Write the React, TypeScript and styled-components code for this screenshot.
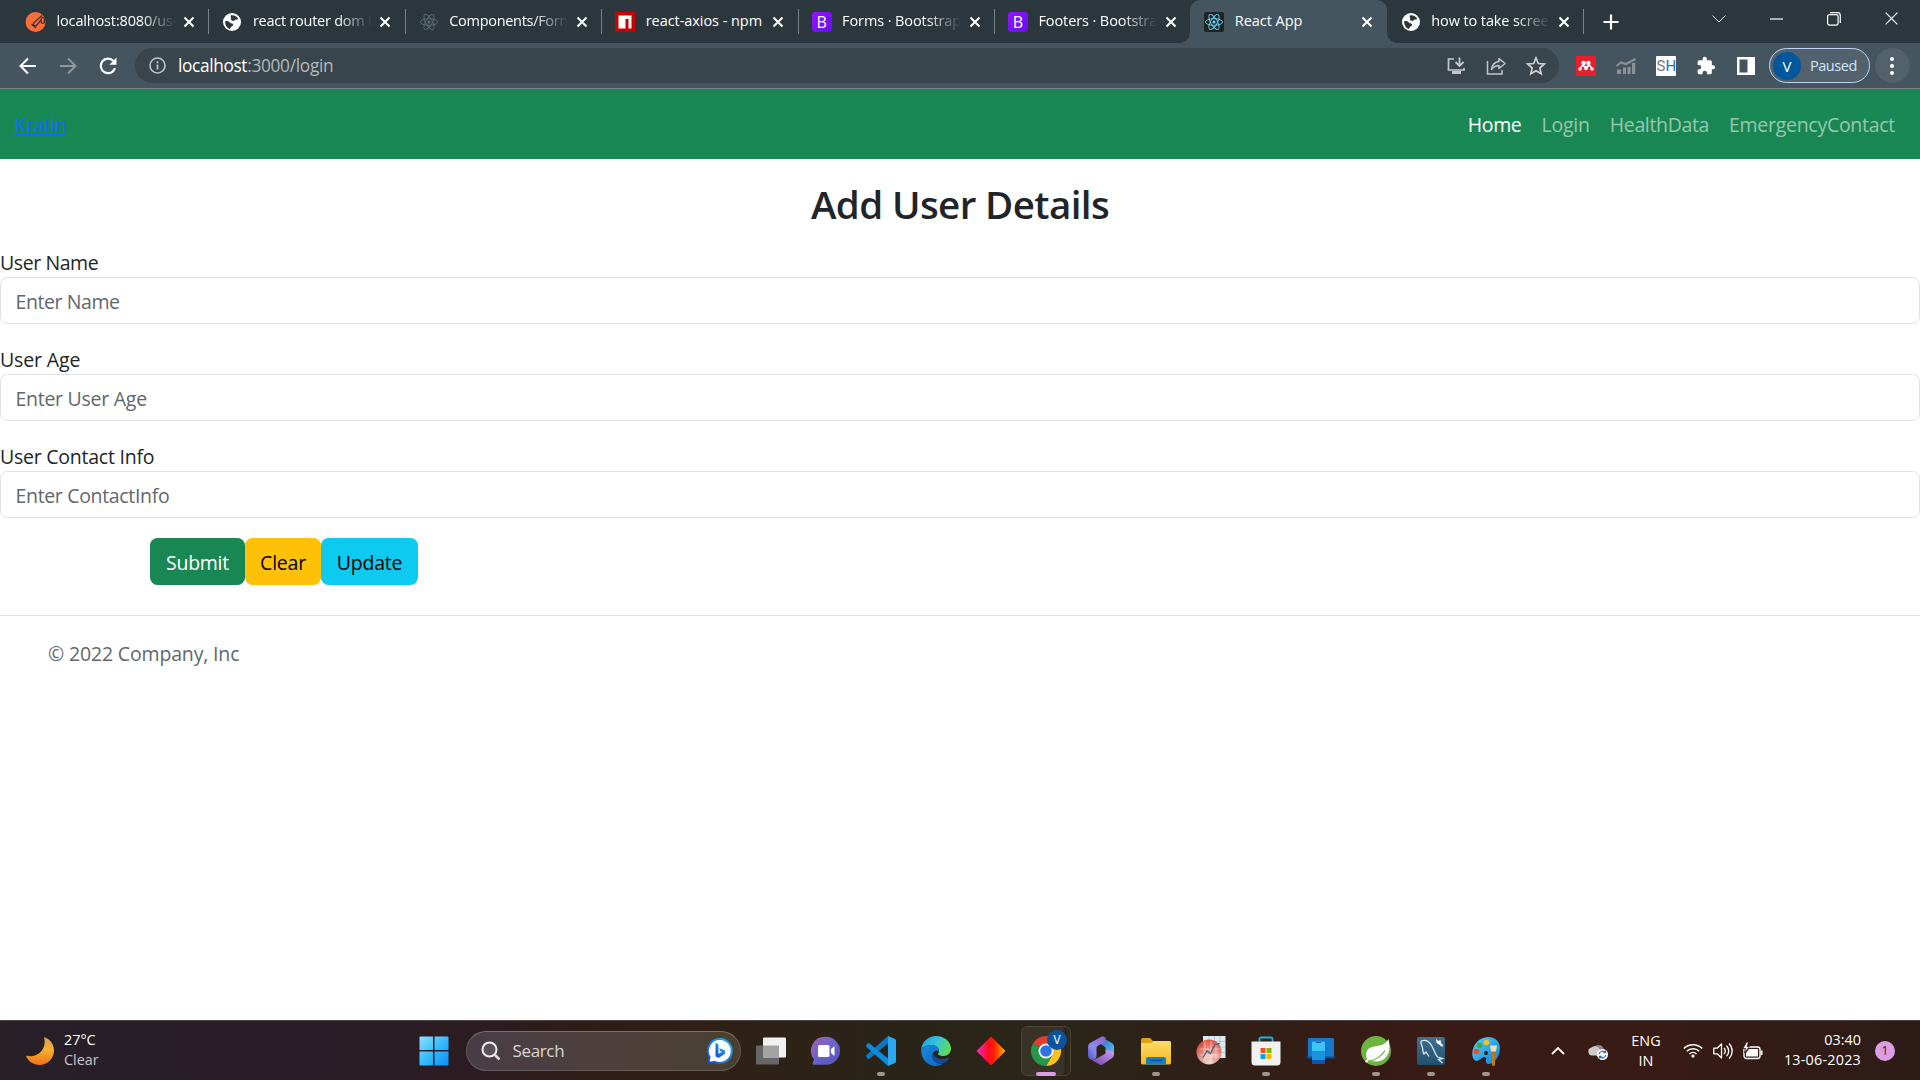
import React from 'react';
import styled, { createGlobalStyle, css } from 'styled-components';

const GlobalStyle = createGlobalStyle`
  *, *::before, *::after { box-sizing: border-box; }
  body { margin: 0; background: #fff; font-family: "Open Sans", "Noto Sans", sans-serif; overflow: hidden; }
  svg { display: block; flex: none; overflow: visible; }
`;

const T = styled.span<{ $track?: number }>`
  letter-spacing: ${p => p.$track ?? 0}px;
  white-space: nowrap;
`;

const Screen = styled.div`
  width: 1920px;
  height: 1080px;
  display: flex;
  flex-direction: column;
  overflow: hidden;
`;

const TabStrip = styled.div`
  height: 43px;
  background: #2c373d;
  display: flex;
  padding-left: 12px;
`;

const Tab = styled.div<{ $active?: boolean; $line?: boolean }>`
  position: relative;
  width: 196.4px;
  height: 43px;
  display: flex;
  align-items: center;
  padding: 0 8.500px 0 14px;
  ${p => p.$active && css`
    background: #44555f;
    border-radius: 10px 10px 0 0;
    &::before, &::after {
      content: '';
      position: absolute;
      bottom: 0;
      width: 10px;
      height: 10px;
    }
    &::before { left: -10px; background: radial-gradient(circle at 0 0, transparent 9.5px, #44555f 10px); }
    &::after { right: -10px; background: radial-gradient(circle at 100% 0, transparent 9.5px, #44555f 10px); }
  `}
  ${p => p.$line && css`
    &::after {
      content: '';
      position: absolute;
      right: -1px;
      top: 9px;
      width: 1px;
      height: 25px;
      background: #7b8387;
    }
  `}
`;

const TabTitle = styled.div<{ $fade?: boolean }>`
  width: 122px;
  margin-left: 10.500px;
  margin-top: -2px;
  white-space: nowrap;
  color: #fff;
  font-size: 14.5px;
  line-height: 24px;
  ${p => p.$fade && css`mask-image: linear-gradient(90deg, #000 84px, transparent 119px);`}
`;

const TabClose = styled.div`
  margin-left: auto;
  width: 22px;
  display: flex;
  justify-content: center;
`;

const NewTab = styled.div`
  width: 56px;
  display: flex;
  align-items: center;
  justify-content: center;
`;

const WindowControls = styled.div`
  margin-left: auto;
  display: flex;
  height: 37px;
`;

const WindowButton = styled.div`
  width: 57.3px;
  display: flex;
  align-items: center;
  justify-content: center;
`;

const Toolbar = styled.div`
  height: 46px;
  background: #44555f;
  border-bottom: 1px solid #77838a;
  display: flex;
  align-items: center;
  padding-left: 7.500px;
`;

const NavButton = styled.div<{ $w?: number }>`
  width: ${p => p.$w ?? 40.3}px;
  display: flex;
  align-items: center;
  justify-content: center;
`;

const Omnibox = styled.div`
  width: 1424px;
  height: 35px;
  margin-left: 6.500px;
  border-radius: 18px;
  background: #39454c;
  display: flex;
  align-items: center;
  padding-left: 14px;
  padding-right: 3px;
`;

const Address = styled.div`
  flex: 1;
  margin-left: 12px;
  font-size: 17.3px;
  line-height: 30px;
  color: #b3b9bc;
  b { font-weight: 400; color: #fff; }
`;

const Extensions = styled.div`
  display: flex;
  align-items: center;
  margin-left: 7.500px;
`;

const ProfilePill = styled.div`
  width: 101px;
  height: 35px;
  margin-left: 2.500px;
  border: 1.5px solid #c3d3f8;
  border-radius: 18px;
  background: #51626d;
  display: flex;
  align-items: center;
  padding-left: 3px;
  color: #d3e3fd;
  font-size: 14.5px;
  gap: 9px;
`;

const Avatar = styled.div`
  width: 28px;
  height: 28px;
  border-radius: 50%;
  background: #01579b;
  color: #fff;
  font-size: 15px;
  display: flex;
  align-items: center;
  justify-content: center;
`;

const MenuDots = styled.div`
  width: 35px;
  height: 35px;
  margin-left: 5px;
  border-radius: 50%;
  background: #52616a;
  display: flex;
  flex-direction: column;
  align-items: center;
  justify-content: center;
  gap: 3px;
  i { width: 4px; height: 4px; border-radius: 50%; background: #fff; }
`;

const ShBox = styled.div`
  width: 20px;
  height: 20px;
  border-radius: 1px;
  background: #fff;
  color: #777;
  font: 15px/20px Roboto, sans-serif;
  display: flex;
  justify-content: center;
  b { color: #2a6cc0; font-weight: 400; }
`;

const SiteNav = styled.nav`
  height: 70px;
  background: #198754;
  display: flex;
  align-items: center;
  justify-content: space-between;
  padding: 1px 25px 0 14.500px;
  font-size: 19.5px;
  line-height: 30px;
`;

const Brand = styled.a`
  color: #0d6efd;
  text-decoration: underline;
  text-decoration-thickness: 2px;
  text-underline-offset: 2px;
`;

const NavLinks = styled.div`
  display: flex;
  gap: 20px;
`;

const NavLink = styled.a<{ $on?: boolean }>`
  color: ${p => (p.$on ? '#fff' : 'rgba(255,255,255,0.55)')};
`;

const Page = styled.main`
  flex: 1;
  background: #fff;
  color: #212529;
`;

const Title = styled.h1`
  margin: 0;
  height: 88px;
  padding-top: 21px;
  text-align: center;
  font-size: 38.500px;
  line-height: 48px;
  font-weight: 600;
`;

const Field = styled.div`
  height: 97px;
  display: flex;
  flex-direction: column;
`;

const Label = styled.label`
  font-size: 19.5px;
  line-height: 30px;
  height: 30px;
  padding-top: 1px;
`;

const Input = styled.input<{ $track: number }>`
  width: 100%;
  height: 47px;
  border: 1px solid #dee2e6;
  border-radius: 7.5px;
  padding: 2px 15px 0 14.500px;
  background: #fff;
  font: 19.5px "Open Sans", "Noto Sans", sans-serif;
  letter-spacing: ${p => p.$track}px;
  &::placeholder { color: #62676c; opacity: 1; }
`;

const Actions = styled.div`
  display: flex;
  margin-left: 150px;
`;

const Button = styled.button<{ $bg: string; $fg: string; $w: number }>`
  width: ${p => p.$w}px;
  height: 47px;
  border: 0;
  border-radius: 7.5px;
  padding: 2px 0 0;
  background: ${p => p.$bg};
  color: ${p => p.$fg};
  font: 19.5px "Open Sans", "Noto Sans", sans-serif;
`;

const Footer = styled.footer`
  margin-top: 30px;
  border-top: 1px solid #dee2e6;
  padding: 23px 0 0 48px;
  color: #62676c;
  font-size: 19.5px;
  line-height: 30px;
`;

const Taskbar = styled.div`
  height: 60px;
  flex: none;
  border-top: 1px solid #4b4543;
  background: linear-gradient(90deg, #281f27 0, #281d27 300px, #2c1c22 470px, #301c16 620px, #2f2115 740px, #2a2418 880px, #2c2418 1100px, #301f17 1230px, #371b14 1400px, #371b14 1680px, #2d1b18 1920px);
  display: flex;
  align-items: center;
  color: #fff;
`;

const Weather = styled.div`
  display: flex;
  align-items: center;
  gap: 9px;
  width: 406px;
  padding-left: 25px;
  font-size: 14.4px;
  line-height: 20px;
`;

const Stack = styled.div<{ $align?: string; $lift?: number }>`
  display: flex;
  flex-direction: column;
  align-items: ${p => p.$align ?? 'flex-start'};
  margin-bottom: ${p => p.$lift ?? 0}px;
  small { font-size: inherit; color: #c9c4c8; }
`;

const SearchBox = styled.div`
  width: 275px;
  height: 40px;
  margin: 0 2px 0 5px;
  border-radius: 20px;
  border: 1px solid rgba(255,255,255,0.14);
  border-top-color: rgba(255,255,255,0.26);
  background: linear-gradient(90deg, #493d45, #4d3f3c 55%, #49402f);
  display: flex;
  align-items: center;
  padding: 0 7px 0 13.500px;
  color: #dad6d6;
  font-size: 17px;
`;

const SearchText = styled.div`
  flex: 1;
  margin-left: 12px;
`;

const TaskItem = styled.div`
  position: relative;
  width: 55px;
  height: 60px;
  display: flex;
  align-items: center;
  justify-content: center;
`;

const FocusPlate = styled.div`
  width: 50px;
  height: 50px;
  border-radius: 6px;
  border: 1px solid #4b4437;
  background: #393327;
  box-shadow: inset -5px 0 0 -1px #30291d, inset -6px 0 0 -1px #211c14;
  display: flex;
  align-items: center;
  padding-left: 9px;
`;

const Indicator = styled.i<{ $focus?: boolean }>`
  position: absolute;
  left: calc(50% - ${p => (p.$focus ? 10 : 4)}px);
  bottom: 5px;
  width: ${p => (p.$focus ? 20 : 8)}px;
  height: 4px;
  border-radius: 2px;
  background: ${p => (p.$focus ? '#d99ee4' : '#a09690')};
`;

const Tray = styled.div`
  margin-left: auto;
  display: flex;
  align-items: center;
  padding-right: 15px;
  font-size: 14.4px;
  line-height: 20px;
`;

const TrayCell = styled.div<{ $w: number }>`
  width: ${p => p.$w}px;
  display: flex;
  justify-content: center;
`;

const ClockCell = styled.div`
  width: 89px;
  margin-right: 24px;
`;

const Badge = styled.div`
  width: 20px;
  height: 20px;
  margin-right: 10px;
  margin-left: -10px;
  border-radius: 50%;
  background: #dd9de5;
  color: #2a1c2b;
  font-size: 12px;
  line-height: 20px;
  text-align: center;
`;

const BootMark = styled.div`
  width: 20px;
  height: 20px;
  flex: none;
  border-radius: 3px;
  background: linear-gradient(135deg, #9013fe, #6610f2);
  color: #fff;
  font: 500 16px/20px "Open Sans", sans-serif;
  text-align: center;
`;

const Postman = () => (
  <svg width="20" height="20" viewBox="0 0 20 20">
    <circle cx="9.500" cy="10" r="10" fill="#ff6c37" />
    <path d="M16 3.500 8 10.500l-1 3 3 .5 5.500-6.500" stroke="#2c373d" strokeWidth="1.300" fill="none" />
    <path d="M5.500 12 10 16" stroke="#2c373d" strokeWidth="1.200" />
    <ellipse cx="16.800" cy="8.500" rx="1.700" ry="3" fill="#ff6c37" stroke="#2c373d" strokeWidth="1.200" />
  </svg>
);
const Globe = () => (
  <svg width="20" height="20" viewBox="0 0 20 20">
    <circle cx="10" cy="10" r="9" fill="#fff" />
    <path d="M3.2 9.2c.8-.4 3.600-.2 4.300 1 .5 1 2.200.8 3.300 1.600 1 .9 0 2.200-1.200 2.600-1 .4-.8 1.800-1.800 2.500C5 16 3 13 3.200 9.200zM9 3.300c2.400-.6 5.500.6 6.800 2.700.7 1-.5 1.800-1.700 1.600-1.300-.2-1.300 1.400-2.600 1.300-1.500-.1-2.800-.7-2.400-2C9.400 5.900 8 4.600 9 3.300z" fill="#2c373d" />
  </svg>
);
const ReactMark = ({ dim }: { dim?: boolean }) => {
  const c = dim ? '#5b6c76' : '#61dafb';
  return (
    <svg width="20" height="20" viewBox="0 0 20 20">
      {!dim && <rect width="20" height="20" rx="2" fill="#222" />}
      <g fill="none" stroke={c} strokeWidth="0.9">
        <ellipse cx="10" cy="10" rx="8.600" ry="3.300" />
        <ellipse cx="10" cy="10" rx="8.600" ry="3.300" transform="rotate(60 10 10)" />
        <ellipse cx="10" cy="10" rx="8.600" ry="3.300" transform="rotate(120 10 10)" />
      </g>
      <circle cx="10" cy="10" r="1.600" fill={c} />
    </svg>
  );
};
const Npm = () => (
  <svg width="20" height="20" viewBox="0 0 20 20">
    <rect width="20" height="20" fill="#cb0000" />
    <path d="M3.500 3.500h13v13h-3V7h-3v9.500h-7z" fill="#fff" />
  </svg>
);
const Cross = ({ s = 10, w = 2 }: { s?: number; w?: number }) => (
  <svg width={s} height={s} viewBox="0 0 10 10"><path d="M.5.5l9 9M9.500.5l-9 9" stroke="#fff" strokeWidth={w} /></svg>
);

const tabs: { icon: React.ReactNode; title: string; track: number; fade?: boolean; active?: boolean; line?: boolean }[] = [
  { icon: <Postman />, title: 'localhost:8080/use', track: -0.15, fade: true, line: true },
  { icon: <Globe />, title: 'react router dom i', track: -0.25, fade: true, line: true },
  { icon: <ReactMark dim />, title: 'Components/Form', track: -0.3, fade: true, line: true },
  { icon: <Npm />, title: 'react-axios - npm', track: -0.05, line: true },
  { icon: <BootMark>B</BootMark>, title: 'Forms · Bootstrap', track: -0.1, fade: true, line: true },
  { icon: <BootMark>B</BootMark>, title: 'Footers · Bootstra', track: -0.1, fade: true },
  { icon: <ReactMark />, title: 'React App', track: -0.05, active: true },
  { icon: <Globe />, title: 'how to take scree', track: -0.1, fade: true, line: true },
];

const Moon = () => (
  <svg width="30" height="30" viewBox="0 0 30 30">
    <defs><linearGradient id="moon" x1="0" y1="0" x2="0" y2="1"><stop offset="0" stopColor="#d9a05a" /><stop offset=".45" stopColor="#f5b12e" /><stop offset="1" stopColor="#f0701a" /></linearGradient></defs>
    <path d="M19 1C25 3 29 8 29 14.500 29 22.500 22.500 29 14.500 29 8.500 29 3 25.500 1 19.500c2 .8 4.500 1 7 .4C17 18 21.500 10 19 1z" fill="url(#moon)" />
  </svg>
);
const StartLogo = () => (
  <svg width="30" height="30" viewBox="0 0 30 30">
    <defs><linearGradient id="win" x1="0" y1="0" x2="1" y2="1"><stop offset="0" stopColor="#8be2ff" /><stop offset=".45" stopColor="#3cc0ff" /><stop offset="1" stopColor="#0a8cf8" /></linearGradient></defs>
    <path d="M1.500.5H14v13.500H.5V1.500a1 1 0 0 1 1-1zM15.500.5h13a1 1 0 0 1 1 1V14h-14zM.5 15.500H14v14H1.500a1 1 0 0 1-1-1zM15.500 15.500h14v13a1 1 0 0 1-1 1h-13z" fill="url(#win)" />
  </svg>
);
const Bing = () => (
  <svg width="26" height="26" viewBox="0 0 26 26">
    <defs><linearGradient id="bing" x1="0" y1="1" x2="1" y2="0"><stop offset="0" stopColor="#1b48d8" /><stop offset="1" stopColor="#22b8e8" /></linearGradient></defs>
    <path d="M13 1a12 12 0 1 1-5.500 22.800L1.500 25l1-6A12 12 0 0 1 13 1z" fill="#fff" stroke="url(#bing)" strokeWidth="2" />
    <path d="M8.500 5l3 1.200v9.600l3.500-2-1.800-.9-1-2.600 6 2.200v3.300l-6.700 4.200-3-1.800z" fill="url(#bing)" />
  </svg>
);
const TaskView = () => (
  <svg width="32" height="30" viewBox="0 0 32 30">
    <rect x="1" y="9.500" width="23" height="19" rx="1" fill="#666" />
    <rect x="8" y="1.500" width="23" height="20" rx="1" fill="#f2f2f2" />
    <path d="M8 9.500h16v12H8z" fill="#a3a3a3" />
  </svg>
);
const Chat = () => (
  <svg width="30" height="30" viewBox="0 0 30 30">
    <defs><linearGradient id="chat" x1="0" y1="0" x2="1" y2="1"><stop offset="0" stopColor="#a062b0" /><stop offset=".5" stopColor="#6c62c8" /><stop offset="1" stopColor="#4f52c4" /></linearGradient></defs>
    <path d="M15 .8a14 14 0 1 1 0 28H2.500c-.9 0-1.200-.8-.8-1.500L3 23.500A14 14 0 0 1 15 .8z" fill="url(#chat)" />
    <rect x="7" y="9" width="11.500" height="12" rx="1.500" fill="#fff" /><path d="M20 13l3.500-3v10L20 17z" fill="#fff" />
  </svg>
);
const VSCode = () => (
  <svg width="30" height="30" viewBox="0 0 30 30">
    <path d="M22 7.500 3.500 22.500a1.500 1.500 0 0 1-2 0L.5 21a1.500 1.500 0 0 1 0-2L22 0z" fill="#0a78c2" />
    <path d="M22 22.500 3.500 7.500a1.500 1.500 0 0 0-2 0L.5 9a1.500 1.500 0 0 0 0 2L22 30z" fill="#0d8ad8" />
    <path d="M22 0l7 3a2 2 0 0 1 1 1.800v20.400a2 2 0 0 1-1 1.800l-7 3z" fill="#2ba7f2" />
  </svg>
);
const Edge = () => (
  <svg width="30" height="30" viewBox="0 0 30 30">
    <defs>
      <linearGradient id="edgeTop" x1="0" y1=".2" x2="1" y2=".6"><stop offset="0" stopColor="#1f9fe0" /><stop offset=".5" stopColor="#35c5dd" /><stop offset="1" stopColor="#62df4c" /></linearGradient>
      <linearGradient id="edgeSide" x1="0" y1="0" x2="1" y2="1"><stop offset="0" stopColor="#1b88d8" /><stop offset="1" stopColor="#0b69c4" /></linearGradient>
    </defs>
    <path d="M.2 13C1.200 5.500 7.500 0 15 0c8.500 0 15 6 15 12.500 0 4.500-3.500 7.500-7.500 7.500-3.500 0-6-1-5.200-2.500 2-3-.3-8.500-6.300-8.500C6.500 9 2.500 10.500.2 13z" fill="url(#edgeTop)" />
    <path d="M.2 13C3 9.500 7 8.500 11 9c4 .4 7 3 7 6.500-4-2-7 1-6.500 5C12 25 16 28 22 27.500 19.500 29.300 17 30 14.500 30 6 30-.6 22 .2 13z" fill="url(#edgeSide)" />
    <path d="M12 17c-3 7 3 12 10 10.500 2.500-1 4.500-2.500 6-5 .4-.8-.2-1.200-1-.8-5 2.800-13 1.300-15-4.700z" fill="#134b96" />
  </svg>
);
const Diamond = () => (
  <svg width="30" height="30" viewBox="0 0 30 30">
    <defs><linearGradient id="dia"><stop offset="0" stopColor="#ff2bd0" /><stop offset=".4" stopColor="#ff0a20" /><stop offset=".6" stopColor="#ff1e00" /><stop offset="1" stopColor="#ffb400" /></linearGradient></defs>
    <path d="M15 .5 29.500 15 15 29.500.5 15z" fill="url(#dia)" />
  </svg>
);
const Chrome = () => (
  <svg width="30" height="30" viewBox="0 0 30 30">
    <path d="M15 15 2 7.500A15 15 0 0 1 28 7.500L15 8z" fill="#e33b2e" />
    <path d="M15 15 28 7.500A15 15 0 0 1 15 30l6.500-11.200z" fill="#fcc31e" />
    <path d="M15 15l6.500 3.700L15 30A15 15 0 0 1 2 7.500z" fill="#279847" />
    <path d="M15 8h13.300c.6 1.400 1 2.800 1.400 4.400H15z" fill="#fcc31e" />
    <circle cx="15" cy="15" r="7.500" fill="#fff" /><circle cx="15" cy="15" r="5.800" fill="#2f72e8" />
    <circle cx="26" cy="4" r="10" fill="#0a549b" />
    <text x="26" y="8.300" textAnchor="middle" fontSize="12" fontWeight="600" fill="#cfe0f0" fontFamily="Open Sans">V</text>
  </svg>
);
const M365 = () => (
  <svg width="28" height="30" viewBox="0 0 28 30">
    <defs>
      <linearGradient id="mA" x1="1" y1="0" x2="0" y2="1"><stop offset="0" stopColor="#8b62d6" /><stop offset=".6" stopColor="#8f8be8" /><stop offset="1" stopColor="#4a54c0" /></linearGradient>
      <linearGradient id="mB" x1="0" y1="1" x2="1" y2="0"><stop offset="0" stopColor="#6b3fae" /><stop offset="1" stopColor="#d8a4ec" /></linearGradient>
      <linearGradient id="mC" x1="0" y1="0" x2="1" y2="1"><stop offset="0" stopColor="#2f5fc0" /><stop offset="1" stopColor="#58c8f2" /></linearGradient>
    </defs>
    <path d="M14 1l11 6a4 4 0 0 1 2 3.500V19l-8.500-4.500v-3L11 6z" fill="url(#mC)" />
    <path d="M27 16.500c0 3.500-.3 4.700-2.500 6L16 28.300a4 4 0 0 1-4 0L4 23.600c3 .4 5-.6 7.500-2l7-4.200v-4z" fill="url(#mB)" />
    <path d="M14 1 3 7a4 4 0 0 0-2 3.500v9c0 2 1 3 3 4.200 3 .3 5.500-.7 5.500-3.700v-7.500c0-1.500.5-2.300 2-3.200L18.500 6V1.800C17 .6 15.500.2 14 1z" fill="url(#mA)" />
  </svg>
);
const Explorer = () => (
  <svg width="30" height="30" viewBox="0 0 30 30">
    <defs><linearGradient id="fold" x1="0" y1="0" x2="0" y2="1"><stop offset="0" stopColor="#ffdc6b" /><stop offset="1" stopColor="#f6b91c" /></linearGradient></defs>
    <path d="M0 4a2 2 0 0 1 2-2h7l3 3h8v8H0z" fill="#e2a210" />
    <path d="M0 7h10l3-2h15.500A1.500 1.500 0 0 1 30 6.500V27a1.500 1.500 0 0 1-1.500 1.500h-27A1.500 1.500 0 0 1 0 27z" fill="url(#fold)" />
    <path d="M5 23a2 2 0 0 1 2-2h16a2 2 0 0 1 2 2v5.500H5z" fill="#127ed0" /><path d="M8.500 24.500h13" stroke="#0a4f9a" strokeWidth="1.500" />
  </svg>
);
const Chart = () => (
  <svg width="30" height="30" viewBox="0 0 30 30">
    <defs><radialGradient id="ball" cx=".5" cy=".9" r=".9"><stop offset="0" stopColor="#fff2e0" /><stop offset=".5" stopColor="#f0938a" /><stop offset="1" stopColor="#e8402e" /></radialGradient></defs>
    <rect x="7" y="0" width="22.500" height="22" fill="#dceaf2" /><path d="M7 5.500h22M7 11h22M7 16.500h22M13 0v22M18.500 0v22M24 0v22" stroke="#a9c6d8" strokeWidth=".8" />
    <circle cx="13" cy="16" r="12.500" fill="url(#ball)" opacity=".9" />
    <path d="M3.500 13h20M3.500 19h20M9 5v20M15 5v22M20 7v16" stroke="#fff" strokeWidth=".8" opacity=".5" />
    <path d="M7 21.500l4-6.500 3.500 2.500 4.500-9 4.500-1" stroke="#42617c" strokeWidth="1.300" fill="none" />
  </svg>
);
const Store = () => (
  <svg width="30" height="30" viewBox="0 0 30 30">
    <path d="M8.500 7V3a1.500 1.500 0 0 1 1.500-1.500h10A1.500 1.500 0 0 1 21.500 3v4" fill="none" stroke="#1bb0e8" strokeWidth="1.800" />
    <path d="M.5 5.500h29V26a3.500 3.500 0 0 1-3.500 3.500H4A3.500 3.500 0 0 1 .5 26z" fill="#f2f2f2" />
    <path d="M9.500 12h5v5h-5z" fill="#f25022" /><path d="M15.500 12h5v5h-5z" fill="#7fba00" /><path d="M9.500 18h5v5h-5z" fill="#00a4ef" /><path d="M15.500 18h5v5h-5z" fill="#ffb900" />
  </svg>
);
const Phone = () => (
  <svg width="30" height="30" viewBox="0 0 30 30">
    <rect x="2" y="2" width="26" height="19" rx="1" fill="#1478cc" /><path d="M0 20.500h30l-2 2H2z" fill="#0a4e98" />
    <rect x="6" y="5" width="13" height="23" rx="1" fill="#1b93e0" /><path d="M6 6h13v9H6z" fill="#39c6f4" /><path d="M6 24h13v4H6z" fill="#0858b0" /><path d="M10 6.500h5" stroke="#0b5aa8" />
  </svg>
);
const Spring = () => (
  <svg width="30" height="30" viewBox="0 0 30 30">
    <circle cx="15" cy="15" r="15" fill="#6db33f" />
    <path d="M27.500 3c2.500 9 1 22-12 22.500-3 0-5.500-.3-8.500-.5C4 20 4 13 11 11c6-1.500 13-1 16.500-8z" fill="#fff" />
    <path d="M7 25c7-.5 13-4 17-10.500" fill="none" stroke="#6db33f" strokeWidth="1.300" /><circle cx="5.800" cy="25" r="1.500" fill="#fff" />
  </svg>
);
const MySQL = () => (
  <svg width="30" height="30" viewBox="0 0 30 30">
    <defs><linearGradient id="sql" x1="0" y1="0" x2="0" y2="1"><stop offset="0" stopColor="#417090" /><stop offset="1" stopColor="#204f70" /></linearGradient></defs>
    <rect x="1" y="1" width="28" height="28" rx="2" fill="url(#sql)" />
    <path d="M5 5c4-1.500 8 0 10.500 4.500 3 5 3.500 8.500 6 11.500l5 1.500-4 1 4 3.500M5 5c-.5 3 1 4 1.500 7 .5 2 0 4 1.500 6l2-2 3 4.500" fill="none" stroke="#dce9f0" strokeWidth="1.300" />
    <path d="M20 3l2.500 2 2-1 .5 3 2.500 3-2 .5-3-2.500-2-1z" fill="#fff" />
  </svg>
);
const Paint = () => (
  <svg width="30" height="30" viewBox="0 0 30 30">
    <defs><linearGradient id="pal" x1="0" y1="0" x2="1" y2="1"><stop offset="0" stopColor="#55d0f8" /><stop offset="1" stopColor="#0d80d8" /></linearGradient></defs>
    <path d="M17 1c7 0 12 4.500 12 11s-3 12-8 15c-4 2-7 .5-6-3 .6-2.500-1-3.500-3-2.500-3 1.500-5 4.500-8 3C-1.500 21 1 2 17 1z" fill="url(#pal)" />
    <circle cx="15.500" cy="6.500" r="2.800" fill="#f8c21a" /><circle cx="8.500" cy="9.500" r="2.800" fill="#3fae2a" /><circle cx="5.500" cy="15.500" r="2.800" fill="#e0562a" /><circle cx="15" cy="17" r="2" fill="#301c16" />
    <path d="M21 15h3v13.500a1.500 1.500 0 0 1-3 0z" fill="#c07818" /><path d="M19 9.500h7l-1 6h-5z" fill="#f0dcb8" />
  </svg>
);
const CloudSync = () => (
  <svg width="20" height="18" viewBox="0 0 20 18">
    <path d="M5 7.500A5.500 5.500 0 0 1 15.500 6.500 4 4 0 0 1 16 13.500H8z" fill="#8e8785" />
    <path d="M4 13.500a4 4 0 0 1-.5-7.900 5 5 0 0 1 8 1.400L15 13.500z" fill="#d0cbca" />
    <circle cx="14.500" cy="12.500" r="5.500" fill="#fff" />
    <path d="M11.200 12a3.400 3.400 0 0 1 6-1.600M17.800 13a3.400 3.400 0 0 1-6 1.600M17.500 8.500v2.200h-2.200M11.500 16.500v-2.200h2.200" fill="none" stroke="#1a6fc4" strokeWidth="1.200" />
  </svg>
);
const Wifi = () => (
  <svg width="20" height="15" viewBox="0 0 20 15">
    <path d="M.8 5.500a13 13 0 0 1 18.400 0M3.700 8.300a9 9 0 0 1 12.600 0M6.500 11a5 5 0 0 1 7 0" fill="none" stroke="#fff" strokeWidth="1.500" />
    <circle cx="10" cy="13" r="1.600" fill="#fff" />
  </svg>
);
const Volume = () => (
  <svg width="20" height="18" viewBox="0 0 20 18">
    <path d="M.8 6.200h3.400L8.500 2v14l-4.300-4.200H.8z" fill="none" stroke="#fff" strokeWidth="1.300" strokeLinejoin="round" />
    <path d="M11 6a4.200 4.200 0 0 1 0 6M13.500 3.800a7.300 7.300 0 0 1 0 10.400M16 1.500a10.600 10.600 0 0 1 0 15" fill="none" stroke="#fff" strokeWidth="1.300" />
  </svg>
);
const Battery = () => (
  <svg width="20" height="18" viewBox="0 0 20 18">
    <rect x="1" y="5" width="16" height="11.500" rx="2.500" fill="none" stroke="#fff" strokeWidth="1.400" />
    <path d="M3 14.500V11l3-4h9v7.500zM17.800 8.500h1.700v4.500h-1.700z" fill="#fff" />
    <path d="M3.500 0 0 6.500h2.500L1.500 11 6.500 4.500H4L5.500 0z" fill="#fff" stroke="#371b14" strokeWidth=".8" />
  </svg>
);

const apps: { icon: React.ReactNode; state?: 'open' | 'focus' }[] = [
  { icon: <TaskView /> }, { icon: <Chat /> }, { icon: <VSCode />, state: 'open' }, { icon: <Edge /> }, { icon: <Diamond /> },
  { icon: <Chrome />, state: 'focus' }, { icon: <M365 /> }, { icon: <Explorer />, state: 'open' }, { icon: <Chart /> },
  { icon: <Store />, state: 'open' }, { icon: <Phone /> }, { icon: <Spring />, state: 'open' }, { icon: <MySQL />, state: 'open' }, { icon: <Paint />, state: 'open' },
];

export default function App() {
  return (
    <Screen>
      <GlobalStyle />
      <TabStrip>
        {tabs.map(t => (
          <Tab key={t.title} $active={t.active} $line={t.line}>
            {t.icon}
            <TabTitle $fade={t.fade}><T $track={t.track}>{t.title}</T></TabTitle>
            <TabClose><Cross /></TabClose>
          </Tab>
        ))}
        <NewTab><svg width="16" height="16" viewBox="0 0 16 16"><path d="M8 .5v15M.5 8h15" stroke="#fff" strokeWidth="2.200" /></svg></NewTab>
        <WindowControls>
          <WindowButton><svg width="14" height="8" viewBox="0 0 14 8"><path d="M.5.5 7 7 13.500.5" fill="none" stroke="#dfe1e2" /></svg></WindowButton>
          <WindowButton><svg width="13" height="2"><path d="M0 1h13" stroke="#fff" strokeWidth="1.200" /></svg></WindowButton>
          <WindowButton><svg width="14" height="14" viewBox="0 0 14 14"><rect x=".6" y="2.600" width="10.500" height="10.500" rx="2" fill="none" stroke="#fff" strokeWidth="1.200" /><path d="M3 .7h7.500a2.800 2.800 0 0 1 2.800 2.800V11" fill="none" stroke="#fff" strokeWidth="1.200" /></svg></WindowButton>
          <WindowButton><Cross s={13} w={0.9} /></WindowButton>
        </WindowControls>
      </TabStrip>
      <Toolbar>
        <NavButton><svg width="18" height="18" viewBox="0 0 18 18"><path d="M17 9H2M9 1.500 1.500 9 9 16.500" fill="none" stroke="#fff" strokeWidth="2" /></svg></NavButton>
        <NavButton><svg width="18" height="18" viewBox="0 0 18 18"><path d="M1 9h15M9 1.500 16.500 9 9 16.500" fill="none" stroke="#8e989d" strokeWidth="2" /></svg></NavButton>
        <NavButton><svg width="18" height="18" viewBox="0 0 18 18"><path d="M16 11.200A7.300 7.300 0 1 1 14.500 4" fill="none" stroke="#fff" strokeWidth="2.200" /><path d="M17.500.5v7.200h-7.200z" fill="#fff" /></svg></NavButton>
        <Omnibox>
          <svg width="17" height="17" viewBox="0 0 17 17"><circle cx="8.500" cy="8.500" r="7.500" fill="none" stroke="#c0c4c6" strokeWidth="1.600" /><path d="M8.500 7.500v5M8.500 4.300v2" stroke="#c0c4c6" strokeWidth="1.800" /></svg>
          <Address><b><T $track={-0.35}>localhost</T></b><T $track={-0.3}>:3000/login</T></Address>
          <NavButton $w={40}><svg width="20" height="18" viewBox="0 0 20 18"><path d="M8 2H2.500v11H18V11" fill="none" stroke="#c4c7c9" strokeWidth="1.700" /><path d="M6 15.500h9" stroke="#c4c7c9" strokeWidth="3" /><path d="M13.500.5v8M9.500 5l4 4 4-4" fill="none" stroke="#c4c7c9" strokeWidth="1.800" /></svg></NavButton>
          <NavButton $w={40}><svg width="20" height="18" viewBox="0 0 20 18"><path d="M1.500 4v13H16v-4" fill="none" stroke="#c4c7c9" strokeWidth="1.500" /><path d="M13 1.500 19 6.500l-6 5V8.500C9.500 8.500 7.500 10 5.500 12.500c.5-4 3-7.500 7.500-8z" fill="none" stroke="#c4c7c9" strokeWidth="1.500" strokeLinejoin="round" /></svg></NavButton>
          <NavButton $w={40}><svg width="20" height="20" viewBox="0 0 20 20"><path d="M10 2l2.300 5.500 6 .5-4.500 4 1.400 5.800L10 14.700l-5.200 3.100L6.200 12 1.700 8l6-.5z" fill="none" stroke="#d0d2d3" strokeWidth="1.700" /></svg></NavButton>
        </Omnibox>
        <Extensions>
          <NavButton $w={40}><svg width="20" height="20" viewBox="0 0 20 20"><rect width="20" height="20" fill="#e8202e" /><circle cx="7.600" cy="7" r="2.200" fill="#fff" /><circle cx="12.400" cy="7" r="2.200" fill="#fff" /><path d="M6 9.500c1.500 0 2.500 1.500 4 1.500s2.500-1.500 4-1.500" stroke="#fff" strokeWidth="2" fill="none" /><circle cx="4" cy="13" r="1.700" fill="#fff" /><circle cx="10" cy="12.500" r="1.800" fill="#fff" /><circle cx="16" cy="13" r="1.700" fill="#fff" /><path d="M6 9.500c-1 .8-.8 2-2 3.500M14 9.500c1 .8.8 2 2 3.500" stroke="#fff" strokeWidth="1.500" /></svg></NavButton>
          <NavButton $w={40}><svg width="20" height="16" viewBox="0 0 20 16"><path d="M1 11.500h4V16H1zM7 9.500h3V16H7zM11.500 9h3v7h-3zM16 5h3.200v11H16z" fill="#8b9194" /><path d="M.5 8 5 4.500l5 1.500 9.500-5" fill="none" stroke="#8b9194" strokeWidth="2.200" /></svg></NavButton>
          <NavButton $w={40}><ShBox><span>S</span><b>H</b></ShBox></NavButton>
          <NavButton $w={40}><svg width="20" height="20" viewBox="0 0 24 24"><path d="M20.500 11H19V7a2 2 0 0 0-2-2h-4V3.500a2.500 2.500 0 0 0-5 0V5H4a2 2 0 0 0-2 2v3.800h1.500a2.700 2.700 0 0 1 0 5.400H2V20a2 2 0 0 0 2 2h3.800v-1.500a2.700 2.700 0 0 1 5.400 0V22H17a2 2 0 0 0 2-2v-4h1.500a2.500 2.500 0 0 0 0-5z" fill="#fff" /></svg></NavButton>
          <NavButton $w={40}><svg width="18" height="18" viewBox="0 0 18 18"><path d="M0 0h18v18H0zM2.500 2.500v13h8v-13z" fill="#fff" fillRule="evenodd" /></svg></NavButton>
        </Extensions>
        <ProfilePill><Avatar>V</Avatar><T $track={-0.4}>Paused</T></ProfilePill>
        <MenuDots><i /><i /><i /></MenuDots>
      </Toolbar>
      <SiteNav>
        <Brand><T $track={-0.47}>Kratin</T></Brand>
        <NavLinks>
          <NavLink $on><T $track={-0.35}>Home</T></NavLink>
          <NavLink><T $track={-0.22}>Login</T></NavLink>
          <NavLink><T $track={-0.35}>HealthData</T></NavLink>
          <NavLink><T $track={-0.28}>EmergencyContact</T></NavLink>
        </NavLinks>
      </SiteNav>
      <Page>
        <Title><T $track={-0.6}>Add User Details</T></Title>
        <Field><Label><T $track={-0.42}>User Name</T></Label><Input $track={-0.42} placeholder="Enter Name" /></Field>
        <Field><Label><T $track={-0.14}>User Age</T></Label><Input $track={-0.27} placeholder="Enter User Age" /></Field>
        <Field><Label><T $track={-0.24}>User Contact Info</T></Label><Input $track={-0.33} placeholder="Enter ContactInfo" /></Field>
        <Actions>
          <Button $bg="#198754" $fg="#fff" $w={95}><T $track={-0.25}>Submit</T></Button>
          <Button $bg="#ffc107" $fg="#000" $w={76}><T $track={-0.24}>Clear</T></Button>
          <Button $bg="#0dcaf0" $fg="#000" $w={97}><T $track={-0.2}>Update</T></Button>
        </Actions>
        <Footer><T $track={-0.16}>© 2022 Company, Inc</T></Footer>
      </Page>
      <Taskbar>
        <Weather><Moon /><Stack $lift={2}><T>27°C</T><small><T>Clear</T></small></Stack></Weather>
        <TaskItem><StartLogo /></TaskItem>
        <SearchBox>
          <svg width="20" height="20" viewBox="0 0 20 20"><circle cx="8.500" cy="8.500" r="7" fill="#5a5056" stroke="#eee" strokeWidth="2" /><path d="M13.500 13.500l5 5" stroke="#ddd" strokeWidth="2.500" /></svg>
          <SearchText><T $track={-0.35}>Search</T></SearchText>
          <Bing />
        </SearchBox>
        {apps.map((a, i) => (
          <TaskItem key={i}>
            {a.state === 'focus' ? <FocusPlate>{a.icon}</FocusPlate> : a.icon}
            {a.state && <Indicator $focus={a.state === 'focus'} />}
          </TaskItem>
        ))}
        <Tray>
          <TrayCell $w={40}><svg width="14" height="9" viewBox="0 0 14 9"><path d="M1 8l6-6 6 6" fill="none" stroke="#fff" strokeWidth="1.800" /></svg></TrayCell>
          <TrayCell $w={40}><CloudSync /></TrayCell>
          <TrayCell $w={56}><Stack $align="center"><T>ENG</T><T>IN</T></Stack></TrayCell>
          <TrayCell $w={38}><Wifi /></TrayCell>
          <TrayCell $w={22}><Volume /></TrayCell>
          <TrayCell $w={38}><Battery /></TrayCell>
          <ClockCell><Stack $align="flex-end" $lift={2}><T>03:40</T><T $track={0.2}>13-06-2023</T></Stack></ClockCell>
          <Badge>1</Badge>
        </Tray>
      </Taskbar>
    </Screen>
  );
}
